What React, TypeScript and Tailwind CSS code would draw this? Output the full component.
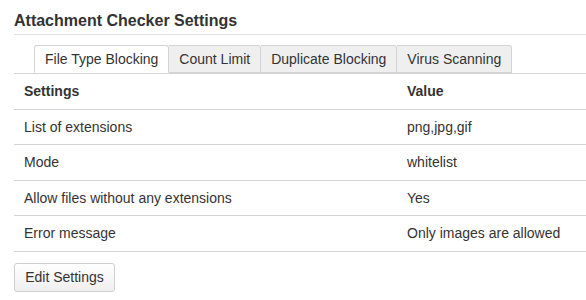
import React from 'react';

const tabs = ['File Type Blocking', 'Count Limit', 'Duplicate Blocking', 'Virus Scanning'];

const rows: [string, string, string][] = [
  ['List of extensions', 'png,jpg,gif', 'h-[35px]'],
  ['Mode', 'whitelist', 'h-[36px]'],
  ['Allow files without any extensions', 'Yes', 'h-[35px]'],
  ['Error message', 'Only images are allowed', 'h-[36px]'],
];

const App: React.FC = () => {
  return (
    <div className="w-[586px] h-[300px] bg-white pl-[14px] text-[#333] text-[14px] font-['Liberation_Sans',Arial,sans-serif]">
      <h2 className="h-[35px] pt-[11px] text-[16px] font-bold leading-[19px] border-b border-[#e2e2e2]">
        Attachment Checker Settings
      </h2>
      <div className="mt-[10px] flex pl-[20px] border-b border-[#d4d4d4]">
        {tabs.map((t, i) => (
          <div
            key={t}
            className={
              i === 0
                ? 'h-[28px] px-[10px] flex items-center border border-[#d4d4d4] border-b-white -mb-px bg-white rounded-t-[3px]'
                : 'h-[28px] px-[10px] flex items-center border border-l-0 border-[#d4d4d4] bg-[#efefef] rounded-tr-[3px]'
            }
          >
            {t}
          </div>
        ))}
      </div>
      <div className="flex h-[36px] items-center font-bold border-b border-[#d4d4d4]">
        <div className="w-[393px] pl-[10px]">Settings</div>
        <div>Value</div>
      </div>
      {rows.map(([k, v, h]) => (
        <div key={k} className={`flex ${h} items-center border-b border-[#d4d4d4]`}>
          <div className="w-[393px] pl-[10px]">{k}</div>
          <div>{v}</div>
        </div>
      ))}
      <button className="mt-[11px] w-[101px] h-[29px] border border-[#cfcfcf] rounded-[3px] bg-gradient-to-b from-white to-[#efefef] text-[#333]">
        Edit Settings
      </button>
    </div>
  );
};

export default App;
